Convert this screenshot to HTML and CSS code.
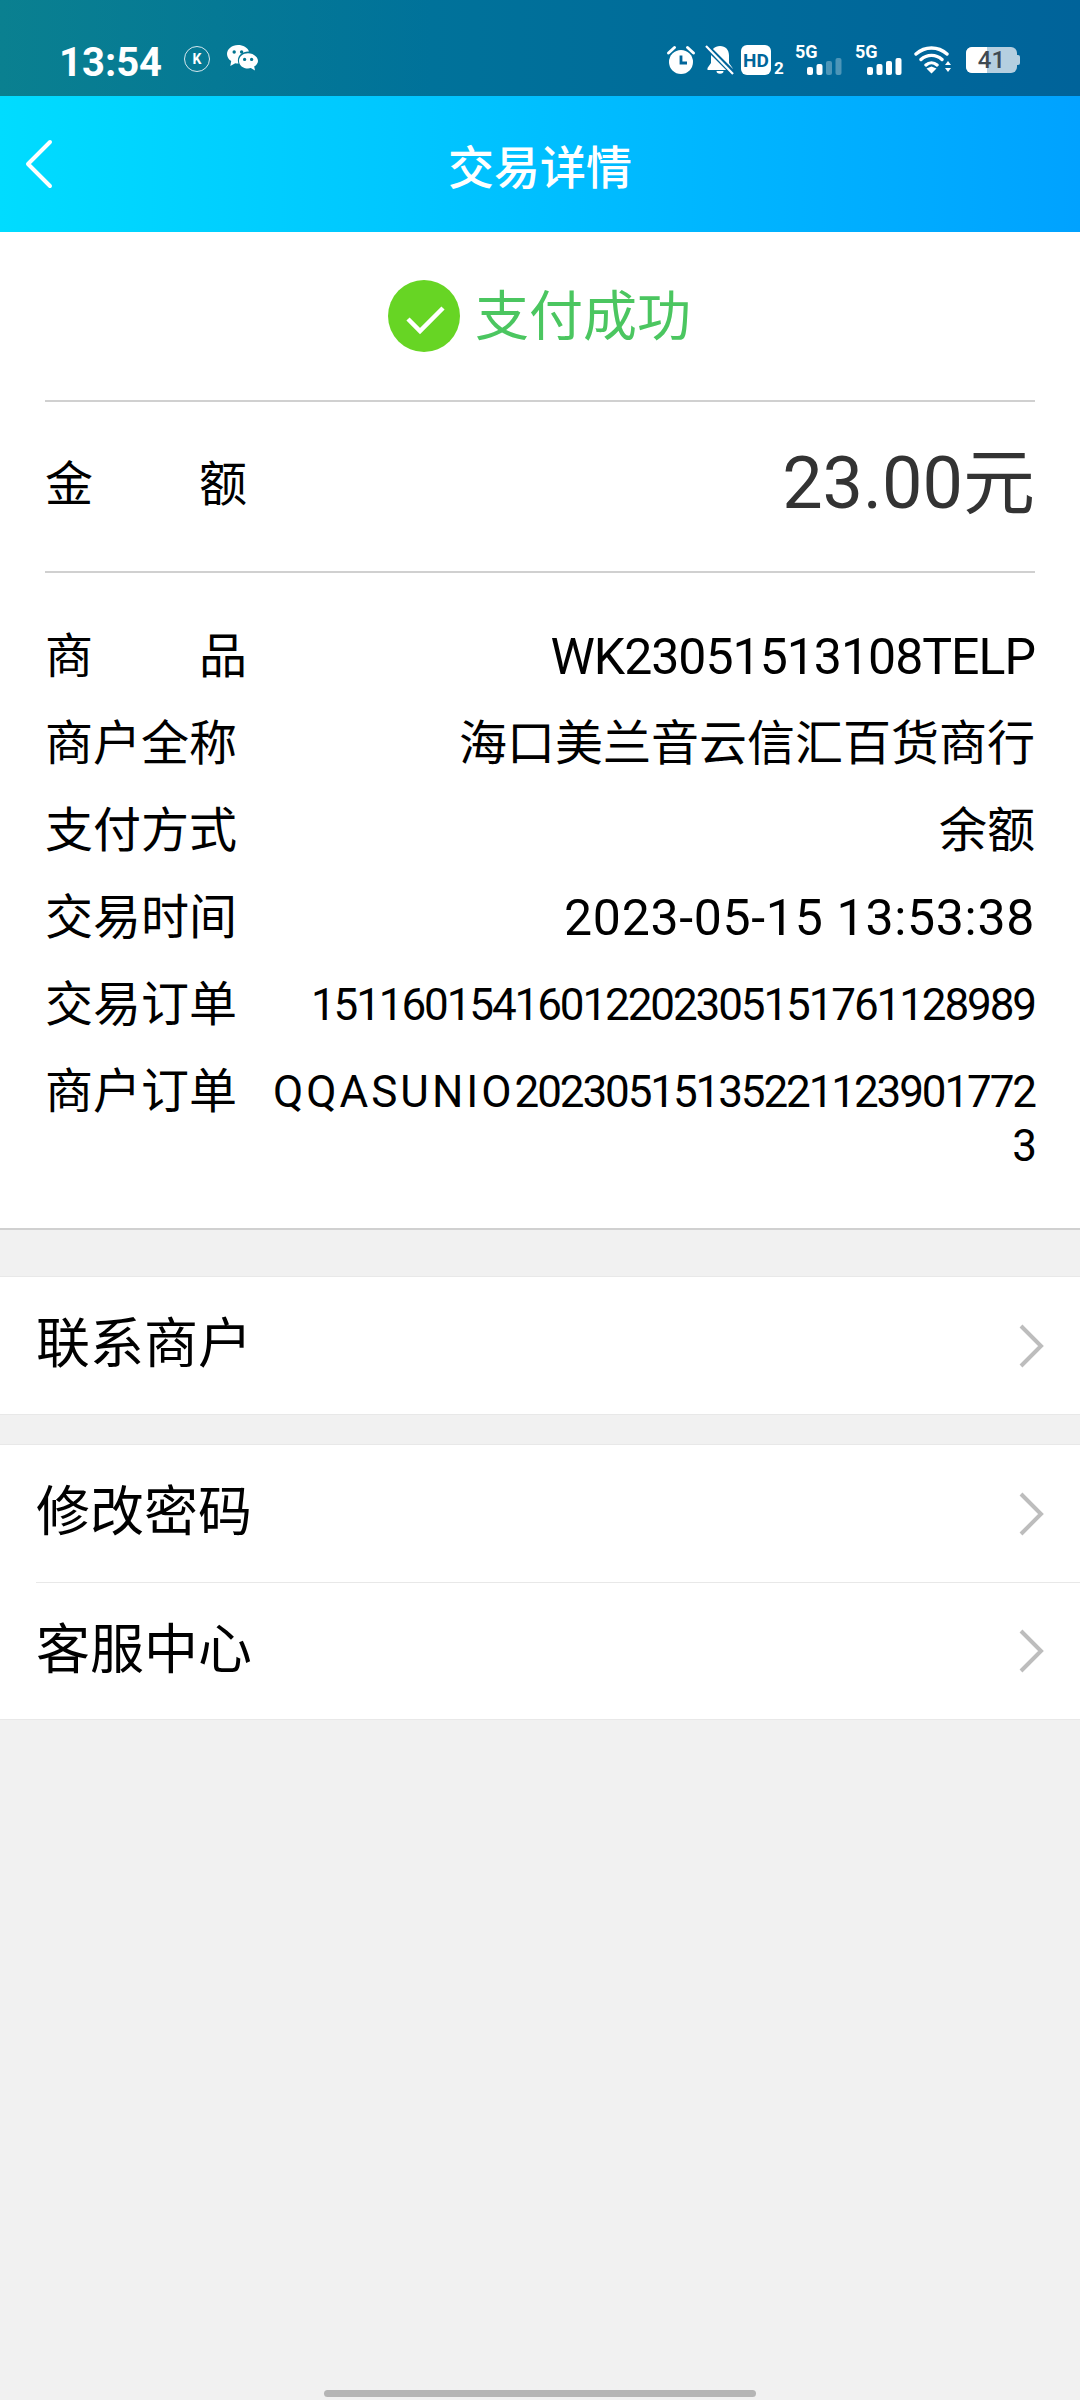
FILE: index.html
```html
<!DOCTYPE html>
<html lang="zh-CN">
  <head>
    <meta charset="UTF-8" />
    <meta name="viewport" content="width=device-width, initial-scale=1.0" />
    <title>交易详情</title>
    <link rel="stylesheet" href="styles.css">
  </head>
  <body>
    <div class="page">
      <!-- 状态栏 -->
      <div class="status-bar">
        <span class="clock">13:54</span>
        <span class="k-badge">K</span>
        <svg class="wechat" width="32" height="32" viewBox="0 0 32 32">
          <path fill="#fff" d="M12 1C5.900 1 1 5 1 10c0 2.900 1.600 5.400 4.200 7.100L4.300 22l5-2.700c.8.200 1.700.300 2.700.300h.6c-.5-1-.7-2.100-.7-3.200 0-5.100 4.700-8.900 10.100-8.900h1C21.600 3.600 17.100 1 12 1z"/>
          <circle cx="8.200" cy="8" r="1.700" fill="#00748f"/>
          <circle cx="15.600" cy="8" r="1.700" fill="#00748f"/>
          <path fill="#fff" d="M22 9.300c-5 0-9 3.400-9 7.600s4 7.600 9 7.600c1 0 1.900-.1 2.800-.4l4.200 2.400-.8-4c2.300-1.400 3.800-3.500 3.800-5.600 0-4.200-5-7.600-10-7.600z"/>
          <circle cx="18.600" cy="15.400" r="1.600" fill="#00748f"/>
          <circle cx="25.600" cy="15.400" r="1.600" fill="#00748f"/>
        </svg>
        <div class="status-icons">
          <svg width="30" height="30" viewBox="0 0 30 30">
            <circle cx="15" cy="17" r="12" fill="#fff"/>
            <path d="M15 10.500V18h6" fill="none" stroke="#00659a" stroke-width="2.800"/>
            <path d="M2.500 8l6-5.500M27.500 8l-6-5.500" stroke="#fff" stroke-width="3" stroke-linecap="round"/>
          </svg>
          <svg class="bell" width="30" height="30" viewBox="0 0 30 30">
            <path fill="#fff" d="M15 1c-5.500 0-9 3.800-9 9.500V18l-3.500 5v2h25v-2L24 18v-7.500C24 4.800 20.500 1 15 1z"/>
            <path fill="#fff" d="M11.500 26h7a3.500 2.800 0 0 1-7 0z"/>
            <path d="M1 1l28 28" stroke="#00659a" stroke-width="5.500"/>
            <path d="M1 1l27 28" stroke="#fff" stroke-width="2.200"/>
          </svg>
          <span class="hd"><span class="hd-box">HD</span><span class="hd-num">2</span></span>
          <span class="signal">
            <span class="signal-label">5G</span>
            <svg width="36" height="17" viewBox="0 0 36 17">
              <rect x="1" y="9" width="6" height="8" rx="2" fill="#fff"/>
              <rect x="10.500" y="6" width="6" height="11" rx="2" fill="#fff"/>
              <rect x="20" y="3" width="6" height="14" rx="2" fill="#fff" opacity=".3"/>
              <rect x="29.500" y="0" width="6" height="17" rx="2" fill="#fff" opacity=".3"/>
            </svg>
          </span>
          <span class="signal">
            <span class="signal-label">5G</span>
            <svg width="36" height="17" viewBox="0 0 36 17">
              <rect x="1" y="9" width="6" height="8" rx="2" fill="#fff"/>
              <rect x="10.500" y="6" width="6" height="11" rx="2" fill="#fff"/>
              <rect x="20" y="3" width="6" height="14" rx="2" fill="#fff"/>
              <rect x="29.500" y="0" width="6" height="17" rx="2" fill="#fff"/>
            </svg>
          </span>
          <svg class="wifi" width="38" height="28" viewBox="0 0 38 28">
            <path d="M2 8c9-8 22-8 31 0M7 13.500c6-5.500 15-5.500 21 0M12 19c3.200-2.800 7.800-2.800 11 0" fill="none" stroke="#fff" stroke-width="3.400" stroke-linecap="round"/>
            <path d="M12.500 22.500l5-2 5 2-5 5zM31 19l3-4 3 4zM31 22h6l-3 4z" fill="#fff"/>
          </svg>
          <span class="battery">
            <span class="battery-level"></span>
            <span class="battery-num">41</span>
          </span>
          <span class="battery-nub"></span>
        </div>
      </div>

      <!-- 标题栏 -->
      <header class="nav-bar">
        <svg class="back" width="30" height="52" viewBox="0 0 30 52">
          <path d="M26 4L4 26l22 22" fill="none" stroke="#fff" stroke-width="4" stroke-linecap="round" stroke-linejoin="round"/>
        </svg>
        <h1>交易详情</h1>
      </header>

      <!-- 交易信息 -->
      <section class="detail">
        <div class="pay-state">
          <svg width="72" height="72" viewBox="0 0 72 72">
            <circle cx="36" cy="36" r="36" fill="#67d524"/>
            <path d="M20 39l12 12 23-23" fill="none" stroke="#fff" stroke-width="4.500"/>
          </svg>
          <span class="pay-text">支付成功</span>
        </div>
        <div class="amount-row">
          <span class="label spread">金 额</span>
          <span class="amount">23.00元</span>
        </div>
        <div class="rows">
          <div class="row">
            <span class="label spread">商 品</span>
            <span class="value code">WK23051513108TELP</span>
          </div>
          <div class="row">
            <span class="label">商户全称</span>
            <span class="value">海口美兰音云信汇百货商行</span>
          </div>
          <div class="row">
            <span class="label">支付方式</span>
            <span class="value">余额</span>
          </div>
          <div class="row">
            <span class="label">交易时间</span>
            <span class="value date">2023-05-15 13:53:38</span>
          </div>
          <div class="row">
            <span class="label">交易订单</span>
            <span class="value small">15116015416012202305151761128989</span>
          </div>
          <div class="row">
            <span class="label">商户订单</span>
            <span class="value small"><span class="wide">QQASUNIO</span>202305151352211239017723</span>
          </div>
        </div>
      </section>

      <!-- 菜单 -->
      <ul class="menu first">
        <li class="menu-item">
          <span class="menu-text">联系商户</span>
          <svg width="26" height="46" viewBox="0 0 26 46"><path d="M3 3l20 20L3 43" fill="none" stroke="#bdbdbd" stroke-width="4"/></svg>
        </li>
      </ul>
      <ul class="menu">
        <li class="menu-item">
          <span class="menu-text">修改密码</span>
          <svg width="26" height="46" viewBox="0 0 26 46"><path d="M3 3l20 20L3 43" fill="none" stroke="#bdbdbd" stroke-width="4"/></svg>
        </li>
        <li class="menu-item">
          <span class="menu-text">客服中心</span>
          <svg width="26" height="46" viewBox="0 0 26 46"><path d="M3 3l20 20L3 43" fill="none" stroke="#bdbdbd" stroke-width="4"/></svg>
        </li>
      </ul>

      <div class="home-bar"></div>
    </div>
  </body>
</html>
```

FILE: styles.css
```css
* {
  box-sizing: border-box;
}
body {
  margin: 0;
  font-family: Roboto, "Noto Sans CJK SC", sans-serif;
  background-color: #f1f1f1;
}
.page {
  width: 1080px;
  height: 2400px;
  display: flex;
  flex-direction: column;
  overflow: hidden;
}

/* 状态栏 */
.status-bar {
  height: 96px;
  flex: none;
  display: flex;
  align-items: center;
  padding: 24px 60px 0 59px;
  background: linear-gradient(90deg, #0a8090, #00729a 40%, #00639a);
  color: #fff;
}
.clock {
  width: 125px;
  margin-top: 5px;
  font-size: 40px;
  font-weight: 700;
}
.k-badge {
  width: 26px;
  height: 26px;
  margin: -2px 16px 0 0;
  border: 1.5px solid #d5e8ee;
  border-radius: 50%;
  display: flex;
  align-items: center;
  justify-content: center;
  font-size: 14px;
  font-weight: 700;
}
.status-icons {
  margin-left: auto;
  display: flex;
  align-items: center;
}
.bell {
  margin-left: 9px;
}
.hd {
  display: flex;
  align-items: flex-end;
  gap: 3px;
  margin-left: 6px;
}
.hd-box {
  width: 30px;
  height: 30px;
  border-radius: 6px;
  background-color: #fff;
  color: #00659a;
  font-size: 19px;
  font-weight: 700;
  display: flex;
  align-items: center;
  justify-content: center;
}
.hd-num {
  width: 10px;
  font-size: 17px;
  line-height: 13px;
  font-weight: 700;
}
.signal {
  width: 47px;
  height: 30px;
  margin-left: 11px;
  display: flex;
  flex-direction: column;
  align-items: flex-end;
}
.signal + .signal {
  margin-left: 13px;
}
.signal-label {
  align-self: flex-start;
  font-size: 18px;
  line-height: 13px;
  font-weight: 700;
}
.wifi {
  margin-left: 12px;
}
.battery {
  position: relative;
  width: 51px;
  height: 26px;
  margin-left: 14px;
  border-radius: 6px;
  background-color: #b5cfe0;
  display: flex;
  align-items: center;
  justify-content: center;
  overflow: hidden;
}
.battery-level {
  position: absolute;
  left: 0;
  top: 0;
  bottom: 0;
  width: 21px;
  background-color: #fff;
}
.battery-num {
  position: relative;
  color: #3f4a52;
  font-size: 24px;
  font-weight: 500;
}
.battery-nub {
  width: 3px;
  height: 10px;
  border-radius: 0 2px 2px 0;
  background-color: #b5cfe0;
}

/* 标题栏 */
.nav-bar {
  position: relative;
  height: 136px;
  flex: none;
  display: flex;
  align-items: center;
  justify-content: center;
  background: linear-gradient(90deg, #00dcff, #00a2ff);
}
.nav-bar h1 {
  margin: 0;
  color: #fff;
  font-size: 46px;
  font-weight: 500;
}
.back {
  position: absolute;
  left: 24px;
  top: 42px;
}

/* 交易信息 */
.detail {
  height: 998px;
  flex: none;
  padding: 0 45px;
  background-color: #fff;
  border-bottom: 2px solid #d0d0d0;
}
.pay-state {
  height: 170px;
  display: flex;
  align-items: center;
  justify-content: center;
  gap: 15px;
  padding-right: 1px;
  color: #4bc660;
  font-size: 54px;
  border-bottom: 2px solid #d0d0d0;
}
.pay-text {
  margin-top: -8px;
}
.amount-row {
  height: 171px;
  display: flex;
  align-items: center;
  justify-content: space-between;
  padding-bottom: 4px;
  border-bottom: 2px solid #d0d0d0;
}
.label {
  width: 225px;
  flex: none;
  font-size: 48px;
  line-height: 54px;
  color: #000;
}
.spread {
  width: 202px;
  text-align-last: justify;
}
.amount {
  margin-bottom: 16px;
  color: #333;
  font-size: 72px;
}
.rows {
  padding-top: 57px;
  display: flex;
  flex-direction: column;
  gap: 33px;
}
.row {
  display: flex;
  align-items: flex-start;
}
.value {
  flex: 1;
  min-width: 0;
  text-align: right;
  color: #000;
  font-size: 48px;
  line-height: 54px;
  word-break: break-all;
}
.value.code {
  font-size: 50px;
  letter-spacing: -1px;
}
.value.date {
  font-size: 50px;
  letter-spacing: .7px;
}
.value.small {
  font-size: 44px;
  letter-spacing: -2.1px;
}
.wide {
  letter-spacing: 3px;
}

/* 菜单 */
.menu {
  margin: 29px 0 0;
  padding: 0 0 0 36px;
  list-style: none;
  background-color: #fff;
  border-top: 1px solid #e8e8e8;
  border-bottom: 1px solid #e8e8e8;
}
.menu.first {
  margin-top: 46px;
}
.menu-item {
  height: 137px;
  display: flex;
  align-items: center;
  justify-content: space-between;
  padding-right: 36px;
  color: #000;
  font-size: 54px;
}
.menu-item + .menu-item {
  border-top: 1px solid #e8e8e8;
}
.menu-text {
  margin-top: -12px;
}

.home-bar {
  width: 432px;
  height: 7px;
  margin: auto auto 3px;
  border-radius: 4px;
  background-color: #b5b5b5;
}
```
